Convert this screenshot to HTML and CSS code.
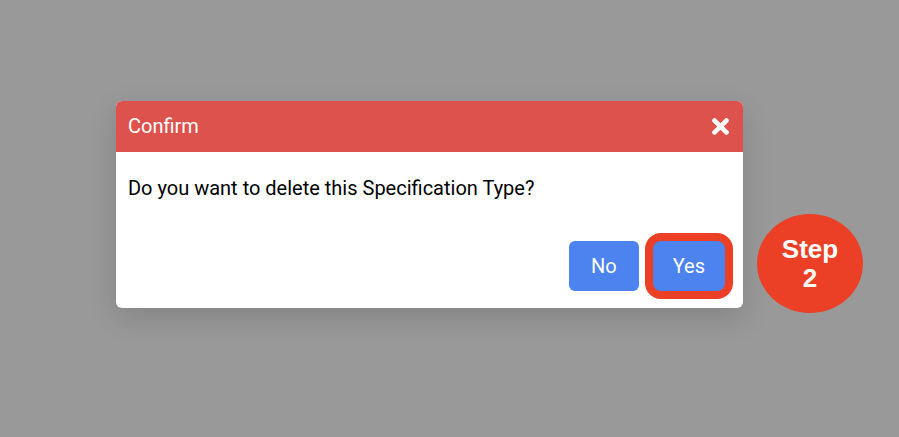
FILE: index.html
```html
<!DOCTYPE html>
<html lang="en">
    <head>
        <meta charset="utf-8">
        <meta name="viewport" content="width=device-width, initial-scale=1">
        <title>Confirm</title>

        <link rel="stylesheet" href="styles.css">
    </head>
    <body>
        <div class="overlay">
            <div class="dialog" role="dialog" aria-labelledby="dialog-title">
                <div class="header">
                    <h1 class="title" id="dialog-title">Confirm</h1>
                    <button class="close" type="button" aria-label="Close">
                        <svg width="17" height="17" viewBox="0 80 352 352">
                            <path fill="currentColor" d="M242.72 256l100.07-100.07c12.28-12.28 12.28-32.19 0-44.48l-22.24-22.24c-12.28-12.28-32.19-12.28-44.48 0L176 189.28 75.93 89.21c-12.28-12.28-32.19-12.28-44.48 0L9.21 111.45c-12.28 12.28-12.28 32.19 0 44.48L109.28 256 9.21 356.07c-12.28 12.28-12.28 32.19 0 44.48l22.24 22.24c12.28 12.28 32.2 12.28 44.48 0L176 322.72l100.07 100.07c12.28 12.28 32.2 12.28 44.48 0l22.24-22.24c12.28-12.28 12.28-32.19 0-44.48L242.72 256z"/>
                        </svg>
                    </button>
                </div>

                <p class="message">Do you want to delete this Specification Type?</p>

                <div class="footer">
                    <button class="btn" type="button">No</button>
                    <div class="highlight">
                        <button class="btn" type="button">Yes</button>
                    </div>
                </div>

                <div class="step">Step<br>2</div>
            </div>
        </div>
    </body>
</html>
```

FILE: styles.css
```css
body {
    margin: 0;
    font-family: Roboto, sans-serif;
    font-size: 20px;
    line-height: 24px;
    background-color: #999;
}

.overlay {
    display: flex;
    align-items: center;
    justify-content: center;
    box-sizing: border-box;
    min-height: 100vh;
    padding: 0 40px 28px 0;
}

.dialog {
    position: relative;
    width: 73%;
    background-color: #fff;
    border-radius: 6px;
    box-shadow: 0 10px 30px rgba(0, 0, 0, 0.14);
}

.header {
    display: flex;
    align-items: center;
    justify-content: space-between;
    padding: 13px 14px 14px 12px;
    color: #fff;
    background-color: #dd524c;
    border-radius: 6px 6px 0 0;
}

.title {
    margin: 0;
    font-size: 20px;
    font-weight: 400;
}

.close {
    display: flex;
    padding: 0;
    color: #fff;
    background: none;
    border: 0;
}

.message {
    margin: 0;
    padding: 24px 12px 33px;
    color: #000;
}

.footer {
    display: flex;
    align-items: center;
    justify-content: flex-end;
    gap: 6px;
    padding: 0 10px 9px;
}

.btn {
    display: block;
    padding: 13px 22px;
    font-family: inherit;
    font-size: 20px;
    line-height: 24px;
    color: #fff;
    background-color: #4c83ee;
    border: 0;
    border-radius: 6px;
}

.highlight {
    background-color: #eb4026;
    border: 8px solid #eb4026;
    border-radius: 16px;
}

.highlight .btn {
    padding: 13px 20px;
    border-radius: 8px;
}

/* step marker beside the dialog */
.step {
    position: absolute;
    left: 100%;
    bottom: -5px;
    display: flex;
    align-items: center;
    justify-content: center;
    box-sizing: border-box;
    width: 106px;
    height: 99px;
    margin-left: 14px;
    font-family: "Liberation Sans", Arial, sans-serif;
    font-size: 26px;
    font-weight: bold;
    line-height: 29px;
    text-align: center;
    color: #fff;
    background-color: #eb4026;
    border-radius: 50%;
}
```
